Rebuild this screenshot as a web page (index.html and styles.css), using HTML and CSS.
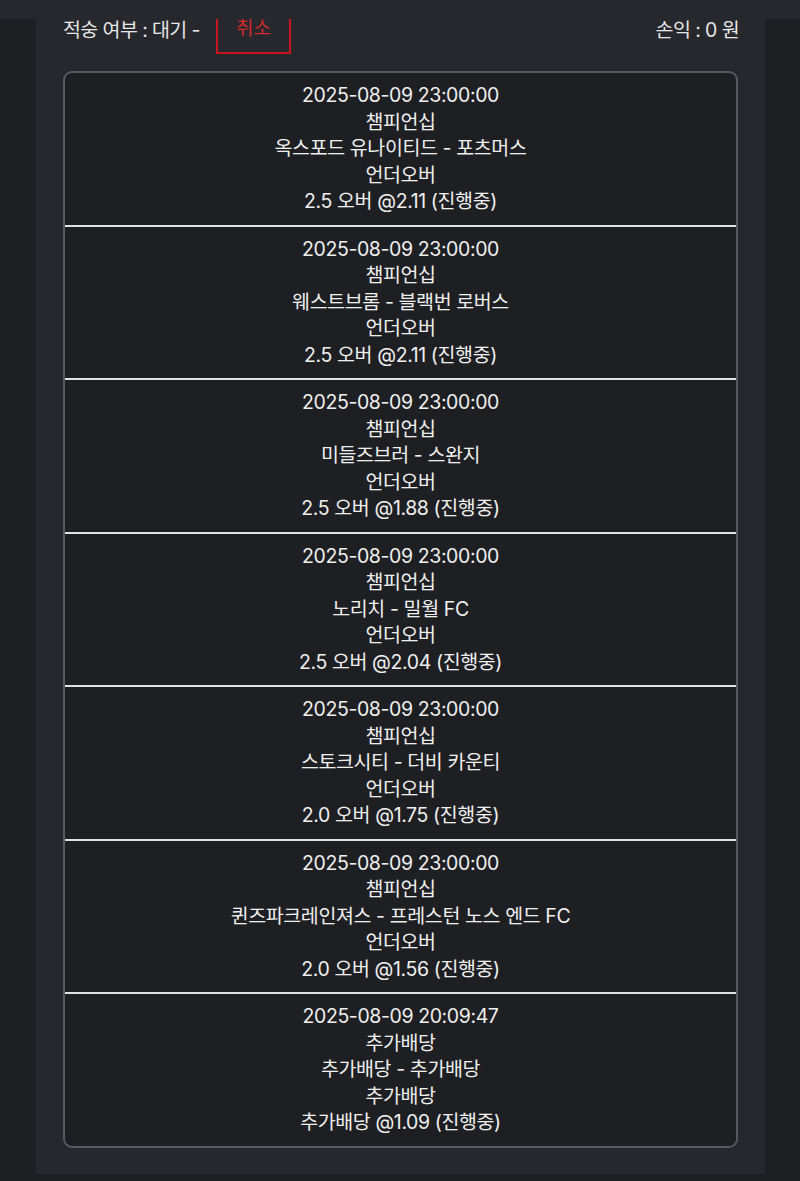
FILE: index.html
```html
<!DOCTYPE html>
<html lang="ko">
<head>
<meta charset="utf-8">
<title>베팅 내역</title>
<link rel="stylesheet" href="styles.css">
</head>
<body>
<div class="topbar"></div>
<main class="panel">
  <div class="head">
    <div class="head-left">
      <span class="status">적숭 여부 : 대기 -</span>
      <button class="cancel" type="button">취소</button>
    </div>
    <span class="profit">손익 : 0 원</span>
  </div>
  <div class="card">
    <div class="row">
      <div>2025-08-09 23:00:00</div>
      <div>챔피언십</div>
      <div>옥스포드 유나이티드 - 포츠머스</div>
      <div>언더오버</div>
      <div>2.5 오버 @2.11 (진행중)</div>
    </div>
    <div class="row">
      <div>2025-08-09 23:00:00</div>
      <div>챔피언십</div>
      <div>웨스트브롬 - 블랙번 로버스</div>
      <div>언더오버</div>
      <div>2.5 오버 @2.11 (진행중)</div>
    </div>
    <div class="row">
      <div>2025-08-09 23:00:00</div>
      <div>챔피언십</div>
      <div>미들즈브러 - 스완지</div>
      <div>언더오버</div>
      <div>2.5 오버 @1.88 (진행중)</div>
    </div>
    <div class="row">
      <div>2025-08-09 23:00:00</div>
      <div>챔피언십</div>
      <div>노리치 - 밀월 FC</div>
      <div>언더오버</div>
      <div>2.5 오버 @2.04 (진행중)</div>
    </div>
    <div class="row">
      <div>2025-08-09 23:00:00</div>
      <div>챔피언십</div>
      <div>스토크시티 - 더비 카운티</div>
      <div>언더오버</div>
      <div>2.0 오버 @1.75 (진행중)</div>
    </div>
    <div class="row">
      <div>2025-08-09 23:00:00</div>
      <div>챔피언십</div>
      <div>퀸즈파크레인져스 - 프레스턴 노스 엔드 FC</div>
      <div>언더오버</div>
      <div>2.0 오버 @1.56 (진행중)</div>
    </div>
    <div class="row">
      <div>2025-08-09 20:09:47</div>
      <div>추가배당</div>
      <div>추가배당 - 추가배당</div>
      <div>추가배당</div>
      <div>추가배당 @1.09 (진행중)</div>
    </div>
  </div>
</main>
</body>
</html>
```

FILE: styles.css
```css
html, body {
  margin: 0;
  padding: 0;
  background: #1d1e21;
}

body {
  font-family: "Inter", "Noto Sans CJK KR", sans-serif;
  color: #efefef;
  font-size: 19.5px;
  min-height: 1181px;
}

.topbar {
  position: fixed;
  top: 0;
  left: 0;
  right: 0;
  height: 19px;
  background: #27282d;
  z-index: 10;
}

.panel {
  margin-left: 36px;
  width: 729px;
  box-sizing: border-box;
  padding: 4px 27px 26px;
  background: #27282d;
}

.head {
  display: flex;
  align-items: center;
  justify-content: space-between;
  height: 48px;
  margin-bottom: 19px;
}

.head-left {
  display: flex;
  align-items: center;
  gap: 16px;
  height: 100%;
}

.status, .profit {
  color: #e6e6e6;
  letter-spacing: -0.6px;
}

.profit {
  margin-right: -1px;
}

.cancel {
  height: 48px;
  width: 75px;
  margin-top: 4px;
  box-sizing: border-box;
  border: 2px solid #c4161c;
  background: transparent;
  color: #d42a2a;
  font-family: inherit;
  font-size: 19px;
  padding: 0 0 7px;
  cursor: pointer;
}

.card {
  background: #1e1f23;
  border: 2px solid #58595e;
  border-radius: 9px;
  overflow: hidden;
}

.row {
  text-align: center;
  line-height: 26.5px;
  padding: 9px 0 10px;
  font-size: 19.5px;
  letter-spacing: -0.4px;
}

.row + .row {
  border-top: 2px solid #e2e2e2;
}
```
